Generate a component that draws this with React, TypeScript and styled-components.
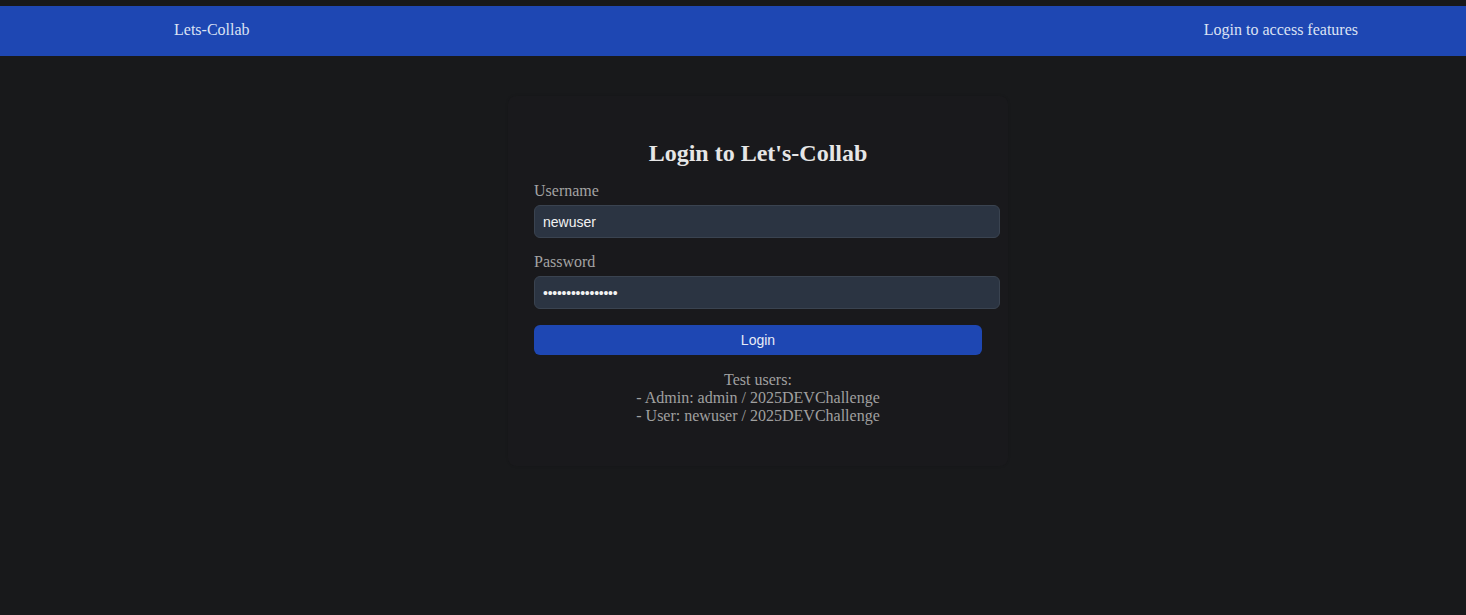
import React from "react";
import styled, { createGlobalStyle } from "styled-components";

const Global = createGlobalStyle`
  html, body { margin: 0; padding: 0; background: #18191b; }
  body { font-family: "Liberation Serif", "Times New Roman", serif; color: #e4e4e4; }
  * { box-sizing: border-box; }
`;

const Page = styled.div`
  min-height: 615px;
  background: #18191b;
  padding-top: 6px;
`;

const NavBar = styled.header`
  height: 50px;
  background: #1e47b3;
  display: flex;
  align-items: center;
  justify-content: space-between;
  padding: 0 108px 2px 174px;
  font-size: 16px;
  color: #dbe2f3;
`;

const NavText = styled.span`
  line-height: 18px;
`;

const Main = styled.main`
  display: flex;
  justify-content: center;
  padding: 40px 0 0 50px;
`;

const Card = styled.section`
  width: 500px;
  padding: 43px 26px 41px;
  background: #19191c;
  border-radius: 8px;
  box-shadow: 0 0 3px rgba(0, 0, 0, 0.12);
  display: flex;
  flex-direction: column;
`;

const Title = styled.h2`
  margin: 0 0 15px;
  font-size: 24px;
  line-height: 28px;
  font-weight: bold;
  text-align: center;
  color: #e6e6e6;
`;

const Field = styled.div<{ $gap: number }>`
  display: flex;
  flex-direction: column;
  margin-bottom: ${(p) => p.$gap}px;
`;

const Label = styled.label`
  font-size: 16px;
  line-height: 18px;
  color: #a3a3a3;
  margin-bottom: 5px;
`;

const Input = styled.input<{ $tight?: boolean }>`
  width: 466px;
  height: 33px;
  padding: 0 8px;
  border: 1px solid #3a4350;
  border-radius: 6px;
  background: #2b3442;
  color: #f2f2f2;
  font-family: "Liberation Sans", Arial, sans-serif;
  font-size: 14px;
  letter-spacing: ${(p) => (p.$tight ? "-0.25px" : "normal")};
  outline: none;
`;

const Button = styled.button`
  width: 448px;
  height: 30px;
  border: none;
  border-radius: 6px;
  background: #1e47b3;
  color: #e8ecf7;
  font-family: "Liberation Sans", Arial, sans-serif;
  font-size: 14px;
  cursor: pointer;
  margin-bottom: 16px;
`;

const Hint = styled.p`
  margin: 0;
  font-size: 16px;
  line-height: 18px;
  text-align: center;
  color: #a0a0a0;
  width: 448px;
`;

export default function App() {
  return (
    <>
      <Global />
      <Page>
        <NavBar>
          <NavText>Lets-Collab</NavText>
          <NavText>Login to access features</NavText>
        </NavBar>
        <Main>
          <Card>
            <Title>Login to Let's-Collab</Title>
            <Field $gap={15}>
              <Label>Username</Label>
              <Input type="text" defaultValue="newuser" />
            </Field>
            <Field $gap={16}>
              <Label>Password</Label>
              <Input type="password" $tight defaultValue="2025DEVChallenge" />
            </Field>
            <Button>Login</Button>
            <Hint>
              Test users:
              <br />- Admin: admin / 2025DEVChallenge
              <br />- User: newuser / 2025DEVChallenge
            </Hint>
          </Card>
        </Main>
      </Page>
    </>
  );
}
